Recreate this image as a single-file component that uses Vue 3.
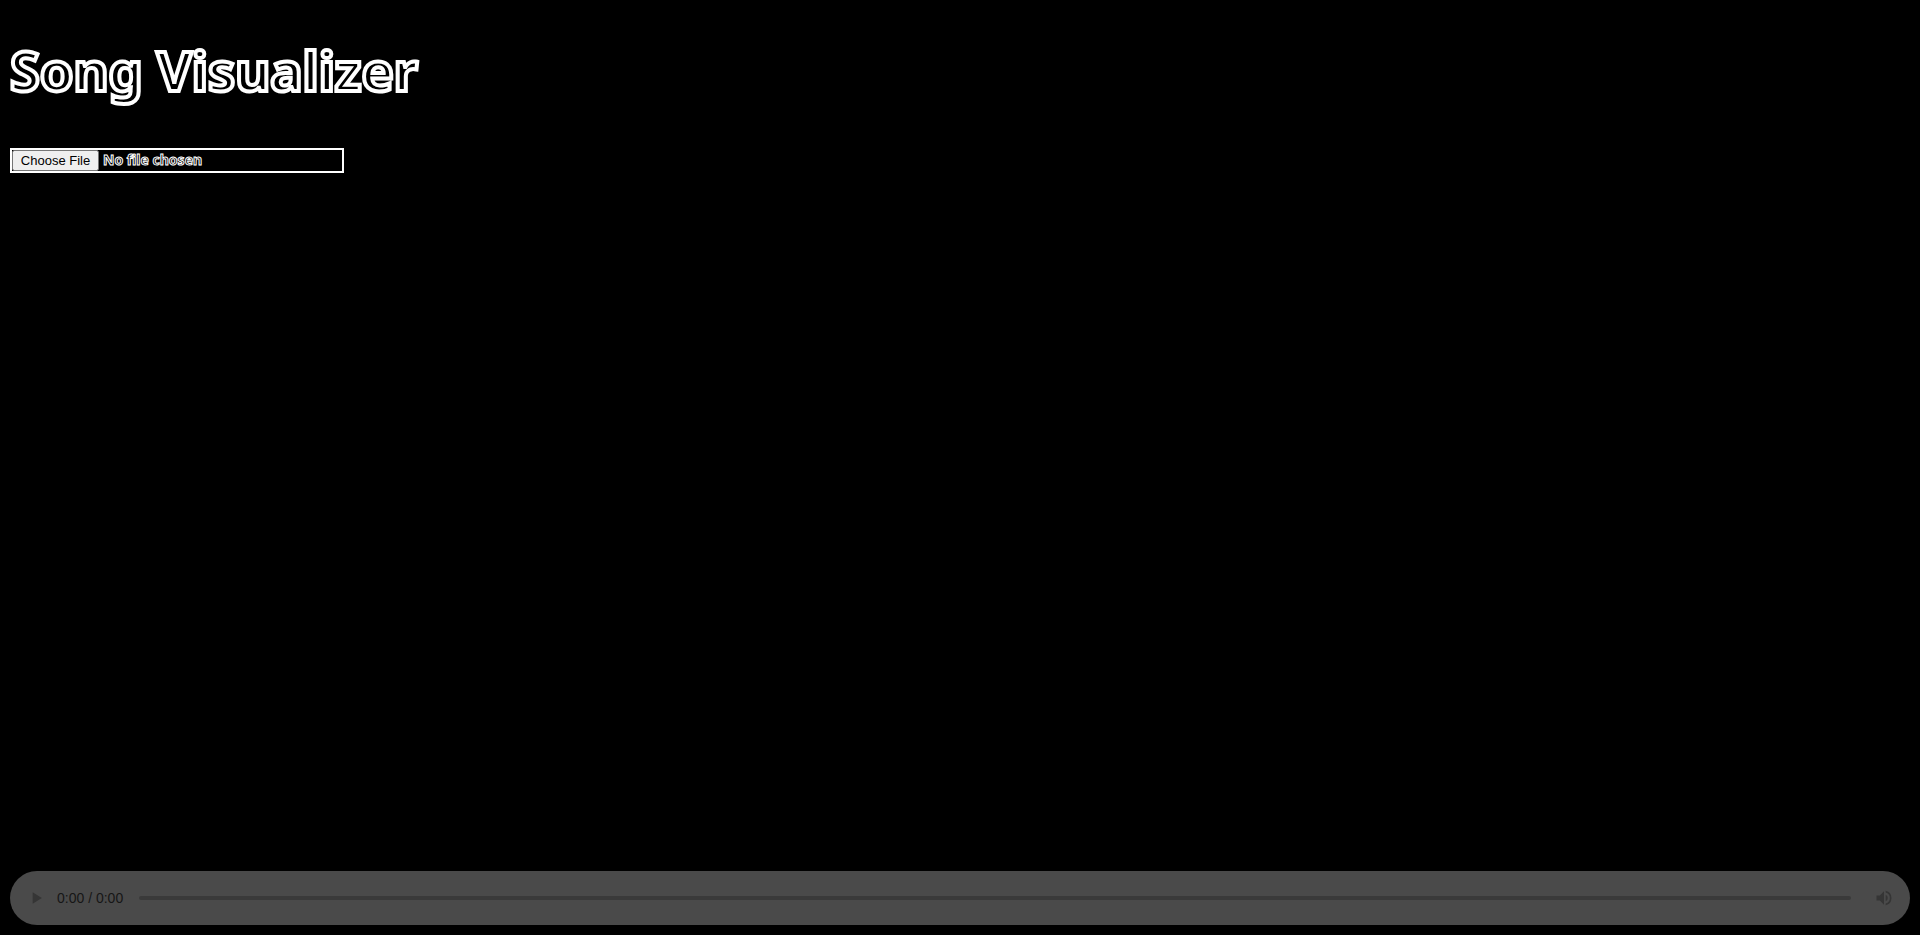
<script setup>
import { ref } from 'vue'

const audio = ref(null)
const position = ref(0)
const song = ref('')

function loadSong(event) {
  const file = event.target.files[0]
  if (file) song.value = URL.createObjectURL(file)
}

function togglePlay() {
  if (!song.value) return
  if (audio.value.paused) audio.value.play()
  else audio.value.pause()
}

function toggleMute() {
  audio.value.muted = !audio.value.muted
}
</script>

<template>
  <main class="page">
    <h1 class="title">Song Visualizer</h1>
    <input class="file" type="file" accept="audio/*" aria-label="Choose a song" @change="loadSong" />
    <section class="player" aria-label="Audio player">
      <audio ref="audio" :src="song || undefined"></audio>
      <button class="icon" type="button" aria-label="Play" @click="togglePlay">
        <svg viewBox="0 0 24 24" width="20" height="20"><path d="M8 5v14l11-7z" /></svg>
      </button>
      <span class="time">0:00 / 0:00</span>
      <input v-model="position" class="track" type="range" min="0" max="100" aria-label="Position" />
      <button class="icon" type="button" aria-label="Mute" @click="toggleMute">
        <svg viewBox="0 0 24 24" width="20" height="20">
          <path d="M3 9v6h4l5 5V4L7 9H3zm13.5 3A4.5 4.5 0 0 0 14 7.97v8.05A4.5 4.5 0 0 0 16.5 12zM14 3.23v2.06a7 7 0 0 1 0 13.42v2.06a9 9 0 0 0 0-17.54z" />
        </svg>
      </button>
    </section>
  </main>
</template>

<style>
body {
  background: #000;
}
</style>

<style scoped>
.page {
  box-sizing: border-box;
  min-height: 100vh;
  padding: 10px;
  display: flex;
  flex-direction: column;
  align-items: flex-start;
  font-family: "Liberation Sans", Arial, sans-serif;
}

.title {
  margin: 28px 0 46px;
  font-family: "Noto Sans", sans-serif;
  font-size: 54px;
  font-weight: 700;
  line-height: 64px;
  color: #000;
  -webkit-text-stroke: 4px #fff;
}

.file {
  box-sizing: border-box;
  width: 334px;
  height: 25px;
  border: 2px solid #fff;
  color: #000;
  font-family: "Noto Sans", sans-serif;
  font-size: 14px;
  font-weight: 700;
  line-height: 17px;
  -webkit-text-stroke: 1px #fff;
}

.file::file-selector-button {
  box-sizing: border-box;
  height: 21px;
  width: 87px;
  padding: 0;
  font-family: "Liberation Sans", Arial, sans-serif;
  font-size: 13px;
  font-weight: 400;
  -webkit-text-stroke: 0;
}

.player {
  box-sizing: border-box;
  width: 100%;
  height: 54px;
  margin-top: auto;
  padding: 0 16px;
  display: flex;
  align-items: center;
  border-radius: 27px;
  background: #4a4a4a;
}

.icon {
  display: flex;
  padding: 0;
  border: 0;
  background: none;
  fill: #353535;
}

.time {
  margin: 0 16px 0 11px;
  font-size: 14px;
  color: #161616;
}

.track {
  flex: 1;
  height: 4px;
  margin: 0 23px 0 0;
  border-radius: 2px;
  background: #3a3a3a;
  appearance: none;
}

.track::-webkit-slider-thumb {
  appearance: none;
  width: 0;
  height: 0;
}
</style>
